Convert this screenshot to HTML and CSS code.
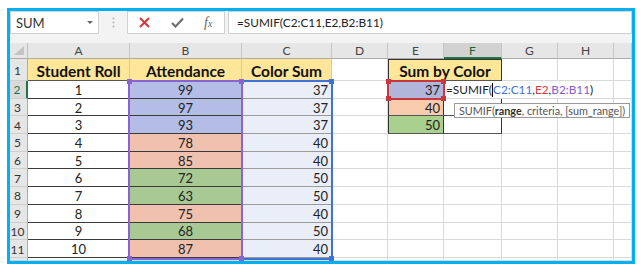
FILE: index.html
```html
<!DOCTYPE html>
<html>
<head>
<meta charset="utf-8">
<link rel="stylesheet" href="styles.css">
</head>
<body>
<div class="frame">
  <div class="toolbar">
    <div class="namebox"><span>SUM</span><span class="caret"></span></div>
    <div class="dots"><svg width="3" height="11" viewBox="0 0 3 11"><circle cx="1.5" cy="1.5" r="1" fill="#b4b4b4"/><circle cx="1.5" cy="5.5" r="1" fill="#b4b4b4"/><circle cx="1.5" cy="9.5" r="1" fill="#b4b4b4"/></svg></div>
    <div class="fxbox">
      <svg class="ic-x" width="11" height="11" viewBox="0 0 11 11"><path d="M1 1 L10 10 M10 1 L1 10" stroke="#d2373a" stroke-width="2" fill="none"/></svg>
      <svg class="ic-ok" width="13" height="11" viewBox="0 0 13 11"><path d="M1 6 L4.5 9.5 L12 1.5" stroke="#707070" stroke-width="2.2" fill="none"/></svg>
      <span class="fx">f<span class="fxs">x</span></span>
    </div>
    <div class="formula">=SUMIF(C2:C11,E2,B2:B11)</div>
  </div>
  <div class="gap"></div>
  <div class="sheet">
    <div class="c corner"><span class="tri"></span></div>
    <div class="c h">A</div><div class="c h">B</div><div class="c h">C</div><div class="c h">D</div><div class="c h">E</div><div class="c h hs">F</div><div class="c h">G</div><div class="c h">H</div><div class="c h"></div>

    <div class="c r">1</div>
    <div class="c y">Student Roll</div><div class="c y">Attendance</div><div class="c y">Color Sum</div><div class="c"></div>
    <div class="c y ey span2">Sum by Color</div><div class="c"></div><div class="c"></div><div class="c"></div>

    <div class="c r ra">2</div>
    <div class="c a">1</div><div class="c b bl">99</div><div class="c cc">37</div><div class="c"></div>
    <div class="c e e2">37</div>
    <div class="c edit span3">=SUMIF(<span class="cur"></span><span class="rb">C2:C11</span>,<span class="rr">E2</span>,<span class="rp">B2:B11</span>)</div>
    <div class="c"></div>

    <div class="c r">3</div>
    <div class="c a">2</div><div class="c b bl">97</div><div class="c cc">37</div><div class="c"></div>
    <div class="c e e3">40</div><div class="c f"></div><div class="c"></div><div class="c"></div><div class="c"></div>

    <div class="c r">4</div>
    <div class="c a">3</div><div class="c b bl">93</div><div class="c cc">37</div><div class="c"></div>
    <div class="c e e4">50</div><div class="c f"></div><div class="c"></div><div class="c"></div><div class="c"></div>

    <div class="c r">5</div>
    <div class="c a">4</div><div class="c b sa">78</div><div class="c cc">40</div><div class="c"></div>
    <div class="c"></div><div class="c"></div><div class="c"></div><div class="c"></div><div class="c"></div>

    <div class="c r">6</div>
    <div class="c a">5</div><div class="c b sa">85</div><div class="c cc">40</div><div class="c"></div>
    <div class="c"></div><div class="c"></div><div class="c"></div><div class="c"></div><div class="c"></div>

    <div class="c r">7</div>
    <div class="c a">6</div><div class="c b gr">72</div><div class="c cc">50</div><div class="c"></div>
    <div class="c"></div><div class="c"></div><div class="c"></div><div class="c"></div><div class="c"></div>

    <div class="c r">8</div>
    <div class="c a">7</div><div class="c b gr">63</div><div class="c cc">50</div><div class="c"></div>
    <div class="c"></div><div class="c"></div><div class="c"></div><div class="c"></div><div class="c"></div>

    <div class="c r">9</div>
    <div class="c a">8</div><div class="c b sa">75</div><div class="c cc">40</div><div class="c"></div>
    <div class="c"></div><div class="c"></div><div class="c"></div><div class="c"></div><div class="c"></div>

    <div class="c r">10</div>
    <div class="c a">9</div><div class="c b gr">68</div><div class="c cc">50</div><div class="c"></div>
    <div class="c"></div><div class="c"></div><div class="c"></div><div class="c"></div><div class="c"></div>

    <div class="c r">11</div>
    <div class="c a">10</div><div class="c b sa">87</div><div class="c cc">40</div><div class="c"></div>
    <div class="c"></div><div class="c"></div><div class="c"></div><div class="c"></div><div class="c"></div>

    <div class="c r"></div>
    <div class="c"></div><div class="c"></div><div class="c"></div><div class="c"></div>
    <div class="c"></div><div class="c"></div><div class="c"></div><div class="c"></div><div class="c"></div>

    <div class="rng rng-c"><i class="hd tr"></i><i class="hd br"></i></div>
    <div class="rng rng-b"><i class="hd tl"></i><i class="hd tr"></i><i class="hd bl"></i><i class="hd br"></i></div>
    <div class="rng rng-e"><i class="hd tl"></i><i class="hd tr"></i><i class="hd bl"></i><i class="hd br"></i></div>
    <div class="tip">SUMIF(<b>range</b>, criteria, [sum_range])</div>
  </div>
</div>
</body>
</html>
```
FILE: styles.css
```css
* { box-sizing: border-box; }
body { margin: 0; background: #fff; font-family: Lato, "Liberation Sans", sans-serif; }

.frame {
  margin: 8px 0 0 7px;
  width: 628px;
  height: 256px;
  border: 3px solid #00b0f0;
  background: #f3f3f3;
  overflow: hidden;
}

.toolbar { display: flex; height: 23px; align-items: flex-start; }
.namebox {
  width: 89px; height: 23px;
  background: #fff; border: 1px solid #d0d0d0;
  display: flex; align-items: center; justify-content: space-between;
  padding: 0 5px 0 5px;
  font-size: 13px; color: #333;
}
.caret { width: 0; height: 0; border-left: 3px solid transparent; border-right: 3px solid transparent; border-top: 3px solid #666; }
.dots { width: 28px; height: 23px; display: flex; align-items: center; justify-content: center; }
.fxbox {
  width: 98px; height: 23px;
  background: #fff; border: 1px solid #d0d0d0;
  display: flex; align-items: center;
  padding-left: 11px;
}
.ic-x { margin-right: 21px; }
.ic-ok { margin-right: 20px; }
.fx { font-family: "Liberation Serif", serif; font-style: italic; font-size: 14px; color: #666; }
.fxs { font-size: 10px; }
.formula {
  flex: 1; height: 23px; margin-left: 3px;
  background: #fff; border: 1px solid #d0d0d0;
  display: flex; align-items: center; padding-left: 8px;
  font-size: 11.8px; color: #222;
}
.gap { height: 9px; }

.sheet {
  position: relative;
  display: grid;
  grid-template-columns: 18px 102px 112px 90px 56px 56px 58px 56px 56px 18px;
  grid-template-rows: 16px 22px repeat(10, 17.7px) 1fr;
  height: 218px;
  background: #fff;
}
.c {
  border-right: 1px solid #d9d9d9;
  border-bottom: 1px solid #d9d9d9;
  display: flex; align-items: center;
  padding: 1px 3px 0;
  font-size: 13px; color: #222;
  white-space: nowrap; overflow: hidden;
}
.corner { background: #e6e6e6; border-right: 1px solid #bdbdbd; border-bottom: 1px solid #ababab; position: relative; }
.tri { position: absolute; right: 3px; bottom: 3px; width: 0; height: 0; border-left: 10px solid transparent; border-bottom: 9px solid #c4c4c4; }
.h { background: #e6e6e6; border-right: 1px solid #c6c6c6; border-bottom: 1px solid #ababab; justify-content: center; font-size: 12px; color: #444; padding: 0; }
.hs { background: #d2d2d2; border-bottom: 2px solid #217346; color: #1f5c3b; }
.r { background: #e6e6e6; border-right: 1px solid #ababab; border-bottom: 1px solid #cfcfcf; justify-content: center; font-size: 12px; color: #333; padding: 1px 2px 0 0; }
.ra { background: #dadada; color: #217346; border-right: 2px solid #217346; }

.y { background: #ffe699; font-weight: 700; font-size: 15.5px; color: #111; justify-content: center; border-right-color: #c9c9c9; border-bottom-color: #555; padding-top: 2px; }
.span2 { grid-column: span 2; }
.span3 { grid-column: span 3; }
.ey { border: 1px solid #333; border-bottom-color: #555; }

.a { justify-content: center; border-bottom-color: #3a3a3a; }
.b { justify-content: center; border-bottom-color: #3a3a3a; }
.bl { background: #b3bde6; }
.sa { background: #f0c1ae; }
.gr { background: #a8c993; }
.cc { justify-content: flex-end; background: #e9eef8; border-bottom-color: #9a9a9a; padding-right: 3px; }

.e { justify-content: flex-end; border-right-color: #333; border-bottom-color: #555; border-left: 1px solid #333; }
.e2 { background: #b2b5da; }
.e3 { background: #f8cbad; }
.e4 { background: #a9d08e; }
.f { border-right-color: #333; border-bottom-color: #555; }

.edit { background: #fff; overflow: visible; padding-left: 2px; font-size: 11.8px; color: #222; position: relative; z-index: 2; border-right-color: #d9d9d9; }
.cur { display: inline-block; width: 0; height: 14px; border-left: 1px solid #000; }
.rb { color: #3e74d6; }
.rr { color: #d9393f; }
.rp { color: #8a5cc9; }

.rng { position: absolute; pointer-events: none; }
.rng-b { left: 118px; top: 37px; width: 115px; height: 180px; border: 2px solid #8b63d0; }
.rng-c { left: 231px; top: 37px; width: 92px; height: 180px; border: 2px solid #3f72d3; }
.rng-e { left: 377px; top: 37px; width: 58px; height: 20px; border: 2px solid #c8363e; z-index: 3; }
.hd { position: absolute; width: 5px; height: 5px; }
.rng-b .hd { background: #8b63d0; }
.rng-c .hd { background: #3f72d3; }
.rng-e .hd { background: #c8363e; }
.tl { left: -3px; top: -3px; }
.tr { right: -3px; top: -3px; }
.hd.bl { left: -3px; bottom: -3px; }
.br { right: -3px; bottom: -3px; }

.tip {
  position: absolute; left: 444px; top: 60px;
  height: 15px; padding: 0 4px;
  background: #fff; border: 1px solid #9a9a9a;
  font-size: 10.8px; color: #555; line-height: 13px; white-space: nowrap;
  z-index: 4;
}
.tip b { color: #333; }
```
